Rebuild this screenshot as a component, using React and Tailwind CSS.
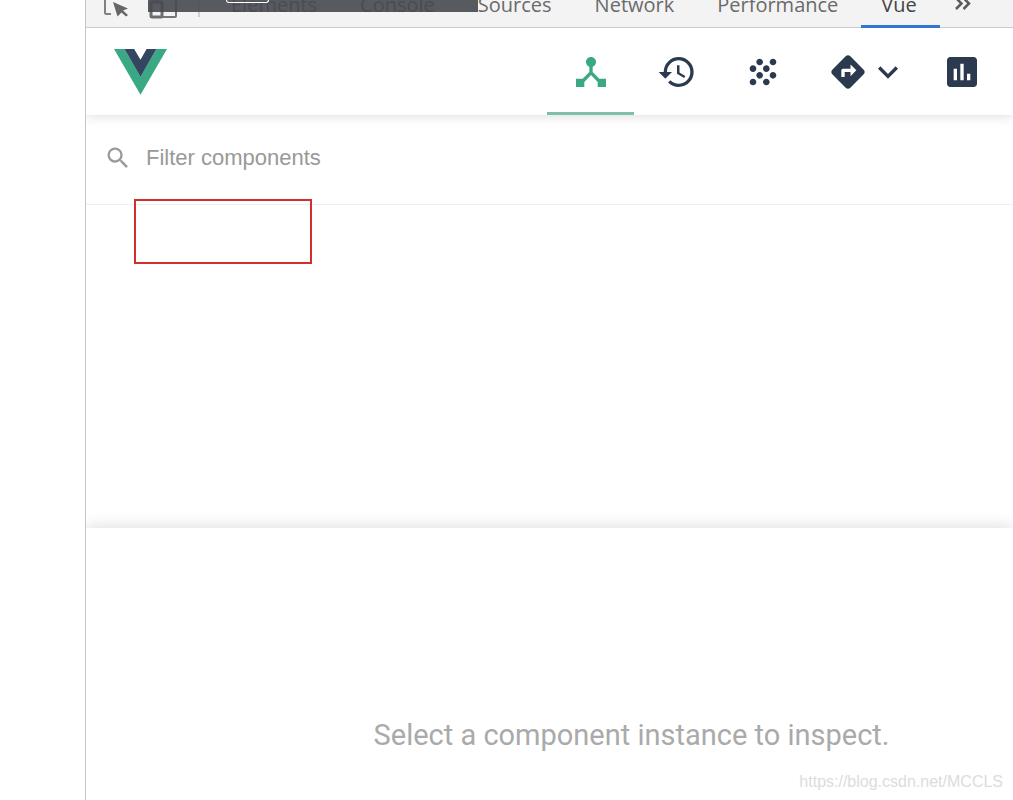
import React from "react";
import {
  MdDeviceHub,
  MdHistory,
  MdGrain,
  MdDirections,
  MdKeyboardArrowDown,
  MdAssessment,
  MdSearch,
} from "react-icons/md";

const tabs = ["Elements", "Console", "Sources", "Network", "Performance", "Vue"];

function InspectIcon() {
  return (
    <svg viewBox="0 0 26 24" className="h-6 w-[26px]" fill="none" aria-hidden="true">
      <path d="M9 19H4.500Q3 19 3 17.500V0" stroke="#808080" strokeWidth="2" />
      <path d="M11 7L26 13.500L21 15.500L26 20L24 21.500L19.500 17.500L15.500 21.500Z" fill="#666" />
    </svg>
  );
}

function DeviceIcon() {
  return (
    <svg viewBox="0 0 30 24" className="h-6 w-[30px]" fill="none" aria-hidden="true">
      <rect x="10" y="-4" width="18" height="26" rx="1" stroke="#777" strokeWidth="2" />
      <rect x="3" y="7" width="11" height="15" rx="1" fill="#f3f3f3" stroke="#6e6e6e" strokeWidth="3" />
    </svg>
  );
}

function MoreTabsIcon() {
  return (
    <svg viewBox="0 0 18 16" className="h-4 w-[18px]" fill="none" stroke="#5a5a5a" strokeWidth="2.500" aria-hidden="true">
      <path d="M2 2L7.500 7.500L2 13M9.500 2L15 7.500L9.500 13" />
    </svg>
  );
}

function VueLogo() {
  return (
    <svg viewBox="0 0 256 221" className="h-[46px] w-[53px]" role="img" aria-label="Vue">
      <path fill="#3ba885" d="M0 0L128 220.800L256 0H204.800L128 132.480L50.560 0Z" />
      <path fill="#34465f" d="M50.560 0L128 133.120L204.800 0H157.440L128 51.200L97.280 0Z" />
    </svg>
  );
}

function TabBar() {
  return (
    <div className="relative z-20 flex h-7 shrink-0 border-b border-[#cbcbcb] bg-[#f3f3f3]">
      <div className="flex h-[27px] w-full items-end overflow-hidden">
        <button aria-label="Inspect element" className="mb-2 ml-4 shrink-0">
          <InspectIcon />
        </button>
        <button aria-label="Toggle device toolbar" className="mb-2 ml-5 shrink-0">
          <DeviceIcon />
        </button>
        <span className="mb-[10px] ml-5 h-6 w-[2px] shrink-0 bg-[#cfcfcf]" />
        <nav className="ml-[10px] flex shrink-0 gap-px">
          {tabs.map((t) => (
            <button
              key={t}
              className={
                "px-[21px] pb-2 font-['Open_Sans',sans-serif] text-[20px] leading-7 " +
                (t === "Vue" ? "text-[#444]" : "text-[#6a6a6a]")
              }
            >
              {t}
            </button>
          ))}
        </nav>
        <button aria-label="More tabs" className="mb-[15px] ml-4 shrink-0">
          <MoreTabsIcon />
        </button>
      </div>
      <div className="absolute left-[62px] top-0 flex h-3 w-[330px] bg-[#46494e]/90">
        <span className="ml-[78px] h-[3px] w-[43px] rounded-b-sm border border-t-0 border-white" />
      </div>
      <span className="absolute right-[73px] top-[25px] h-[3px] w-[79px] bg-[#3474d4]" />
    </div>
  );
}

function Header() {
  const tab = "flex h-full w-[86px] items-center justify-center";
  return (
    <header className="z-10 flex h-[87px] shrink-0 items-center bg-white pl-7 text-[40px] text-[#2c3a50] shadow-[0_0_12px_rgba(0,0,0,0.16)]">
      <VueLogo />
      <nav className="ml-auto flex h-full">
        <button
          aria-label="Components"
          className="flex h-full w-[87px] items-center justify-center border-b-[3px] border-[#7fc0ac] pt-[3px] text-[#3ba885]"
        >
          <MdDeviceHub />
        </button>
        <button aria-label="Timeline" className={tab}>
          <MdHistory />
        </button>
        <button aria-label="Vuex" className={tab}>
          <MdGrain />
        </button>
        <button aria-label="Routing" className="flex h-full w-[113px] items-center pl-[22px]">
          <MdDirections />
          <MdKeyboardArrowDown />
        </button>
        <button aria-label="Performance" className="flex h-full w-[94px] items-center pl-[23px]">
          <MdAssessment />
        </button>
      </nav>
    </header>
  );
}

export default function App() {
  return (
    <div className="relative flex h-screen overflow-hidden bg-white">
      <div className="w-[85px] shrink-0" />
      <main className="flex min-w-0 flex-1 flex-col overflow-hidden border-l border-[#c6c6c6]">
        <TabBar />
        <Header />
        <section className="relative h-[413px] shrink-0">
          <label className="flex h-[90px] items-center border-b border-[#eee] pb-[3px] pl-[18px] text-[#999]">
            <MdSearch className="size-7 shrink-0" />
            <input
              aria-label="Filter components"
              placeholder="Filter components"
              className="ml-[14px] h-8 flex-1 bg-transparent font-['Liberation_Sans',Arial,sans-serif] text-[22px] leading-8 outline-none placeholder:text-[#999]"
            />
          </label>
          <div className="absolute left-12 top-[84px] h-[65px] w-[178px] border-2 border-[#d0312b]" />
        </section>
        <section className="flex-1 bg-white pl-[164px] pt-[187px] text-center shadow-[0_0_16px_rgba(0,0,0,0.16)]">
          <p className="font-[Roboto,sans-serif] text-[29px] leading-10 text-[#aaa]">
            Select a component instance to inspect.
          </p>
        </section>
      </main>
      <span className="absolute bottom-2 right-[10px] font-['Liberation_Sans',Arial,sans-serif] text-[16px] leading-5 text-[#dcdcdc]">
        https://blog.csdn.net/MCCLS
      </span>
    </div>
  );
}
